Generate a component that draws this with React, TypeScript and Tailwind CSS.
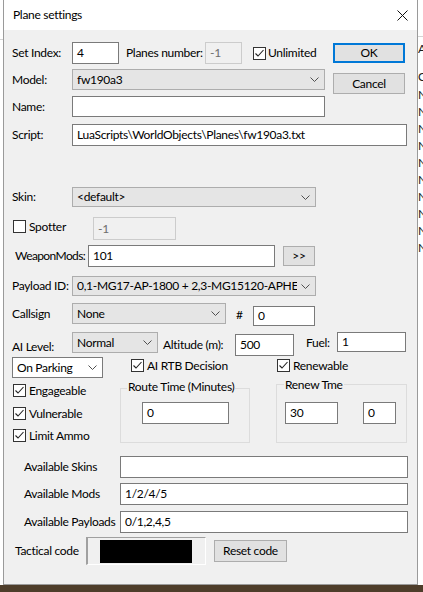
import React from "react";

const txt = "font-['Lato','Noto_Sans',sans-serif] text-[12px] leading-[16px] tracking-[-0.3px] text-black";

function Chevron() {
  return (
    <svg width="9" height="5" viewBox="0 0 9 5" className="shrink-0">
      <path d="M0.5 0.5 L4.5 4.5 L8.5 0.5" fill="none" stroke="#505050" strokeWidth="1" />
    </svg>
  );
}

function Check({ checked }: { checked?: boolean }) {
  return (
    <div className="w-[13px] h-[13px] shrink-0 border border-[#333333] bg-white flex items-center justify-center">
      {checked && (
        <svg width="11" height="11" viewBox="0 0 11 11">
          <path d="M1.5 5.5 L4 8 L9.5 2" fill="none" stroke="#222222" strokeWidth="1.1" />
        </svg>
      )}
    </div>
  );
}

function TextBox({ value, className, disabled }: { value?: string; className: string; disabled?: boolean }) {
  return (
    <div
      className={`shrink-0 flex items-center px-[4px] border overflow-hidden whitespace-nowrap ${
        disabled ? "border-[#cccccc] bg-[#f0f0f0] text-[#6d6d6d]" : "border-[#7a7a7a] bg-white"
      } ${className}`}
    >
      {value}
    </div>
  );
}

function Combo({ value, className, white }: { value: string; className: string; white?: boolean }) {
  return (
    <div
      className={`shrink-0 flex items-center pl-[4px] pr-[5px] gap-[4px] border ${
        white ? "border-[#7a7a7a] bg-white" : "border-[#adadad] bg-[#e5e5e5]"
      } ${className}`}
    >
      <span className="flex-1 min-w-0 overflow-hidden whitespace-nowrap">{value}</span>
      <Chevron />
    </div>
  );
}

function Button({ label, className }: { label: string; className: string }) {
  return (
    <div className={`shrink-0 flex items-center justify-center bg-[#e1e1e1] ${className}`}>{label}</div>
  );
}

function CheckRow({ label, checked, className }: { label: string; checked?: boolean; className?: string }) {
  return (
    <div className={`flex items-center h-[13px] ${className ?? ""}`}>
      <Check checked={checked} />
      <span className="ml-[3px] whitespace-nowrap">{label}</span>
    </div>
  );
}

function Group({ title, className, titleClass, children }: { title: string; className: string; titleClass: string; children: React.ReactNode }) {
  return (
    <div className={`relative border border-[#dcdcdc] ${className}`}>
      <span className={`absolute bg-[#f0f0f0] px-[1px] whitespace-nowrap ${titleClass}`}>{title}</span>
      {children}
    </div>
  );
}

const bgRows = ["No", "No", "No", "No", "No", "No", "No", "No", "No", "No"];

export default function App() {
  return (
    <div className={`w-[423px] h-[592px] flex flex-col overflow-hidden bg-white ${txt}`}>
      <div className="flex h-[585px]">
        {/* background app, left edge */}
        <div className="w-[3px] shrink-0 bg-white">
          <div className="h-[40px] border-b border-[#d4d4d4]" />
        </div>

        {/* dialog */}
        <div className="w-[415px] shrink-0 flex flex-col border-l border-r border-b border-[#9a9a9a]">
          <div className="h-[30px] shrink-0 bg-white flex items-center justify-between pl-[9px] pr-[9px]">
            <span>Plane settings</span>
            <svg width="11" height="11" viewBox="0 0 11 11">
              <path d="M0.5 0.5 L10.5 10.5 M10.5 0.5 L0.5 10.5" stroke="#111111" strokeWidth="1" />
            </svg>
          </div>

          <div className="flex-1 bg-[#f0f0f0] pl-[8px] pr-[9px] flex flex-col">
            {/* set index */}
            <div className="mt-[12px] flex items-center h-[22px]">
              <span className="w-[60px] shrink-0">Set Index:</span>
              <TextBox value="4" className="w-[47px] h-[22px]" />
              <span className="ml-[7px] w-[79px] shrink-0 whitespace-nowrap">Planes number:</span>
              <TextBox value="-1" disabled className="w-[37px] h-[22px]" />
              <div className="ml-[11px]">
                <Check checked />
              </div>
              <span className="ml-[2px]">Unlimited</span>
              <Button label="OK" className="ml-auto mr-[3px] w-[72px] h-[20px] border-2 border-[#0078d7]" />
            </div>

            {/* model */}
            <div className="mt-[5px] flex items-start">
              <span className="w-[60px] h-[21px] shrink-0 flex items-center">Model:</span>
              <Combo value="fw190a3" className="w-[253px] h-[21px]" />
              <Button label="Cancel" className="ml-auto mr-[3px] mt-[4px] w-[72px] h-[21px] border border-[#adadad]" />
            </div>

            {/* name */}
            <div className="mt-[2px] flex items-center h-[21px]">
              <span className="w-[60px] shrink-0">Name:</span>
              <TextBox className="w-[253px] h-[21px]" />
            </div>

            {/* script */}
            <div className="mt-[7px] flex items-center h-[22px]">
              <span className="w-[60px] shrink-0">Script:</span>
              <TextBox value="LuaScripts\WorldObjects\Planes\fw190a3.txt" className="w-[335px] h-[22px]" />
            </div>

            {/* skin */}
            <div className="mt-[41px] flex items-center h-[20px]">
              <span className="w-[60px] shrink-0">Skin:</span>
              <Combo value="<default>" className="w-[244px] h-[20px]" />
            </div>

            {/* spotter */}
            <div className="mt-[10px] flex items-start h-[23px]">
              <div className="ml-[1px] mt-[3px] flex items-center h-[13px]">
                <Check />
                <span className="ml-[3px] w-[64px]">Spotter</span>
              </div>
              <TextBox value="-1" disabled className="w-[83px] h-[23px]" />
            </div>

            {/* weapon mods */}
            <div className="mt-[5px] flex items-center h-[22px]">
              <span className="ml-[3px] w-[73px] shrink-0 whitespace-nowrap tracking-[-0.6px]">WeaponMods:</span>
              <TextBox value="101" className="w-[187px] h-[22px]" />
              <Button label=">>" className="ml-[8px] w-[32px] h-[20px] border border-[#adadad]" />
            </div>

            {/* payload */}
            <div className="mt-[9px] flex items-center h-[20px]">
              <span className="w-[60px] shrink-0 whitespace-nowrap">Payload ID:</span>
              <Combo value="0,1-MG17-AP-1800 + 2,3-MG15120-APHE-500" className="w-[244px] h-[20px]" />
            </div>

            {/* callsign */}
            <div className="mt-[7px] flex items-start">
              <span className="w-[60px] h-[21px] shrink-0 flex items-center">Callsign</span>
              <Combo value="None" className="w-[154px] h-[21px]" />
              <span className="ml-[10px] w-[17px] h-[23px] flex items-center">#</span>
              <TextBox value="0" className="mt-[3px] w-[62px] h-[20px]" />
            </div>

            {/* ai level */}
            <div className="mt-[6px] flex items-start">
              <span className="w-[60px] shrink-0 mt-[7px]">AI Level:</span>
              <Combo value="Normal" className="w-[86px] h-[21px]" />
              <span className="ml-[5px] w-[72px] shrink-0 mt-[5px] whitespace-nowrap">Altitude (m):</span>
              <TextBox value="500" className="mt-[2px] w-[59px] h-[22px]" />
              <span className="ml-[12px] w-[31px] shrink-0 mt-[3px]">Fuel:</span>
              <TextBox value="1" className="w-[69px] h-[20px]" />
            </div>

            {/* options */}
            <div className="mt-[1px] flex items-start">
              <div className="w-[108px] shrink-0 flex flex-col">
                <Combo value="On Parking" white className="w-[91px] h-[21px]" />
                <CheckRow label="Engageable" checked className="mt-[6px] ml-[1px]" />
                <CheckRow label="Vulnerable" checked className="mt-[10px] ml-[1px]" />
                <CheckRow label="Limit Ammo" checked className="mt-[9px] ml-[1px]" />
              </div>
              <div className="w-[156px] shrink-0 flex flex-col">
                <CheckRow label="AI RTB Decision" checked className="mt-[2px] ml-[11px]" />
                <Group title="Route Time (Minutes)" className="mt-[16px] w-[130px] h-[55px]" titleClass="-top-[10px] left-[6px]">
                  <TextBox value="0" className="ml-[21px] mt-[13px] w-[87px] h-[22px]" />
                </Group>
              </div>
              <div className="flex flex-col">
                <CheckRow label="Renewable" checked className="mt-[2px] ml-[1px]" />
                <Group title="Renew Tme" className="mt-[12px] w-[131px] h-[59px]" titleClass="-top-[8px] left-[7px]">
                  <div className="flex mt-[17px]">
                    <TextBox value="30" className="ml-[8px] w-[53px] h-[22px]" />
                    <TextBox value="0" className="ml-[25px] w-[33px] h-[22px]" />
                  </div>
                </Group>
              </div>
            </div>

            {/* available lists */}
            <div className="mt-[13px] flex items-center h-[22px]">
              <span className="pl-[12px] w-[108px] shrink-0">Available Skins</span>
              <TextBox className="flex-1 h-[22px]" />
            </div>
            <div className="mt-[5px] flex items-center h-[22px]">
              <span className="pl-[12px] w-[108px] shrink-0">Available Mods</span>
              <TextBox value="1/2/4/5" className="flex-1 h-[22px]" />
            </div>
            <div className="mt-[6px] flex items-center h-[22px]">
              <span className="pl-[12px] w-[108px] shrink-0 whitespace-nowrap">Available Payloads</span>
              <TextBox value="0/1,2,4,5" className="flex-1 h-[22px]" />
            </div>

            {/* tactical code */}
            <div className="mt-[4px] flex items-center h-[28px]">
              <span className="ml-[3px] w-[71px] shrink-0 whitespace-nowrap">Tactical code</span>
              <div className="w-[120px] h-[28px] shrink-0 border-t border-l-2 border-t-[#a0a0a0] border-l-[#a0a0a0] border-b border-r border-b-white border-r-white pl-[12px] pt-[2px]">
                <div className="w-[92px] h-[23px] bg-black" />
              </div>
              <Button label="Reset code" className="ml-[8px] w-[73px] h-[22px] border border-[#adadad]" />
            </div>
          </div>
        </div>

        {/* background app, right edge */}
        <div className="flex-1 bg-white overflow-hidden flex flex-col whitespace-nowrap text-[#1a1a1a]">
          <div className="h-[37px] shrink-0 border-b border-[#d4d4d4]" />
          <div className="mt-[4px] h-[16px]">Al</div>
          <div className="mt-[12px] h-[16px]">Ca</div>
          <div className="mt-[1px] flex flex-col">
            {bgRows.map((r, i) => (
              <div key={i} className="h-[17px] flex items-center">
                {r}
              </div>
            ))}
          </div>
        </div>
      </div>
      <div className="h-[7px] bg-[#4e3d2a]" />
    </div>
  );
}
